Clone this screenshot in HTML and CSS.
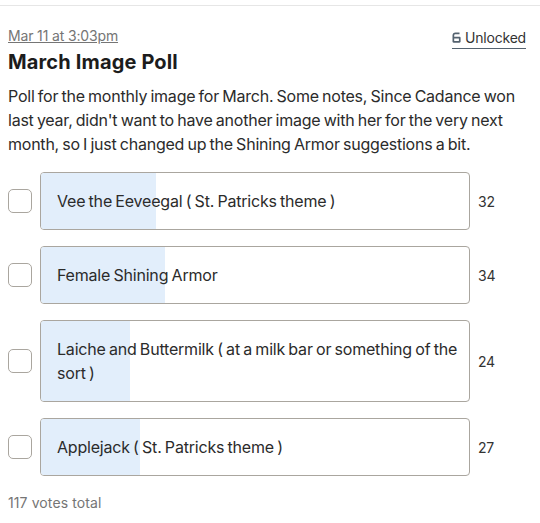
FILE: index.html
```html
<!DOCTYPE html>
<html lang="en">
<head>
    <meta charset="UTF-8">
    <meta name="viewport" content="width=device-width, initial-scale=1.0">
    <title>March Image Poll</title>
    <link rel="stylesheet" href="styles.css">
</head>
<body>
    <div class="post">
        <div class="post-head">
            <div class="head-left">
                <a class="post-date" href="#">Mar 11 at 3:03pm</a>
                <h2 class="post-title">March Image Poll</h2>
            </div>
            <a class="lock-link" href="#">
                <svg class="lock-icon" width="9" height="11" viewBox="0 0 9 11"><path d="M.5 5.500V3.500C.5 1.800 1.700.6 3.400.6H7.500V2.300H3.500C2.700 2.300 2.200 2.800 2.200 3.600V4.800H7.500C8.200 4.800 8.600 5.200 8.600 5.900V9.600C8.600 10.300 8.200 10.700 7.500 10.700H1.600C.9 10.700.5 10.300.5 9.600ZM2.200 6.500V9H6.900V6.500Z" fill-rule="evenodd"/></svg>
                Unlocked
            </a>
        </div>
        <p class="post-body">Poll for the monthly image for March. Some notes, Since Cadance won last year, didn't want to have another image with her for the very next month, so I just changed up the Shining Armor suggestions a bit.</p>

        <div class="poll">
            <div class="poll-row">
                <span class="check"></span>
                <div class="option">
                    <div class="option-bar" style="width: 26.9%"></div>
                    <span class="option-text">Vee the Eeveegal ( St. Patricks theme )</span>
                </div>
                <span class="count">32</span>
            </div>
            <div class="poll-row">
                <span class="check"></span>
                <div class="option">
                    <div class="option-bar" style="width: 29.06%"></div>
                    <span class="option-text">Female Shining Armor</span>
                </div>
                <span class="count">34</span>
            </div>
            <div class="poll-row">
                <span class="check"></span>
                <div class="option">
                    <div class="option-bar" style="width: 20.7%"></div>
                    <span class="option-text">Laiche and Buttermilk ( at a milk bar or something of the sort )</span>
                </div>
                <span class="count">24</span>
            </div>
            <div class="poll-row">
                <span class="check"></span>
                <div class="option">
                    <div class="option-bar" style="width: 23.08%"></div>
                    <span class="option-text">Applejack ( St. Patricks theme )</span>
                </div>
                <span class="count">27</span>
            </div>
        </div>

        <div class="vote-total">117 votes total</div>
    </div>
</body>
</html>
```

FILE: styles.css
```css
body {
    font-family: Inter, "Liberation Sans", sans-serif;
    background: #fff;
    color: #2b2b2b;
    margin: 0;
}

.post {
    margin-top: 5px;
    padding: 20px 8px 0 8px;
    border-top: 1px solid #e6e6e6;
}

/* Header */
.post-head {
    display: flex;
    justify-content: space-between;
    align-items: flex-start;
    padding-right: 6px;
}

.post-date {
    display: block;
    font-size: 14px;
    letter-spacing: -0.15px;
    line-height: 20px;
    color: #757575;
}

.post-title {
    margin: 2px 0 0;
    font-size: 20px;
    line-height: 28px;
    font-weight: 700;
    letter-spacing: 0.15px;
    color: #1c1c1c;
}

.lock-link {
    display: flex;
    align-items: center;
    gap: 4px;
    margin-top: 2px;
    padding-bottom: 1px;
    font-size: 14px;
    letter-spacing: -0.2px;
    line-height: 19px;
    color: #333;
    text-decoration: none;
    border-bottom: 1px solid #54626f;
}

.lock-icon {
    fill: #54626f;
}

.post-body {
    margin: 8px 0 0;
    padding-right: 6px;
    font-size: 16px;
    letter-spacing: -0.23px;
    word-spacing: -1px;
    line-height: 24px;
}

/* Poll */
.poll {
    margin-top: 16px;
    display: flex;
    flex-direction: column;
    gap: 16px;
}

.poll-row {
    display: flex;
    align-items: center;
}

.check {
    flex: none;
    width: 24px;
    height: 24px;
    box-sizing: border-box;
    border: 1px solid #aaa69f;
    border-radius: 5px;
    background: #fff;
}

.option {
    position: relative;
    flex: 1;
    margin-left: 8px;
    padding: 16px 8px 16px 16px;
    border: 1px solid #aaa69f;
    border-radius: 4px;
    font-size: 16px;
    letter-spacing: -0.2px;
    word-spacing: -1px;
    line-height: 24px;
    overflow: hidden;
}

.option-bar {
    position: absolute;
    top: 0;
    bottom: 0;
    left: 0;
    background: #e2eefb;
}

.option-text {
    position: relative;
}

.count {
    flex: none;
    width: 54px;
    margin-left: 8px;
    font-size: 14px;
    letter-spacing: -0.2px;
    color: #333;
}

.vote-total {
    margin-top: 17px;
    font-size: 14px;
    letter-spacing: 0.1px;
    line-height: 20px;
    color: #757575;
}
```
